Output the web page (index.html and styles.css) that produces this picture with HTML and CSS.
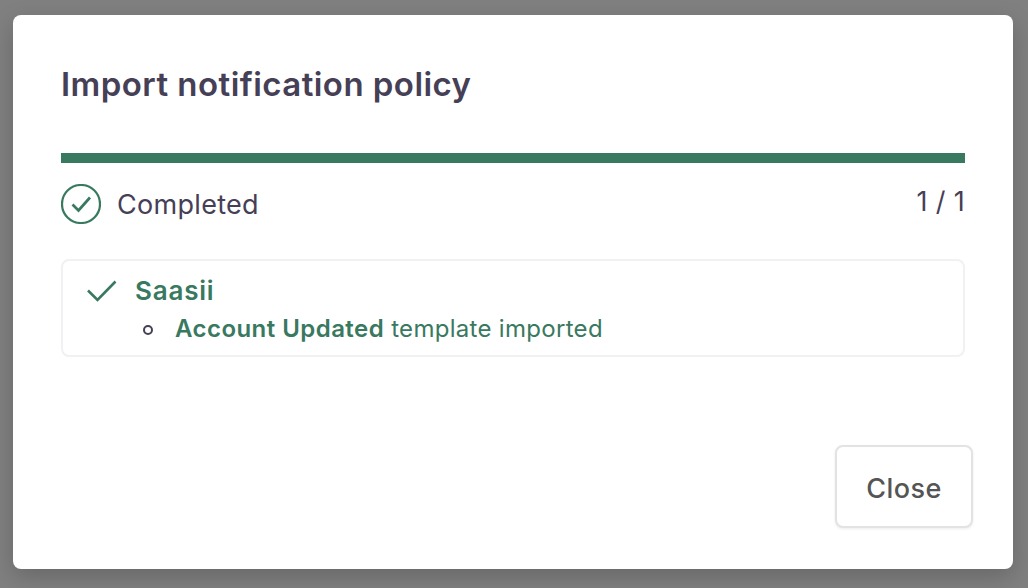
FILE: index.html
```html
<!DOCTYPE html>
<html lang="en">
<head>
    <meta charset="UTF-8">
    <title>Import notification policy</title>
    <link rel="stylesheet" href="styles.css">
</head>
<body>
    <div class="modal">
        <h2 class="modal-title">Import notification policy</h2>
        <div class="progress-bar"></div>
        <div class="progress-info">
            <div class="progress-status">
                <svg class="status-icon" width="40" height="40" viewBox="0 0 40 40" fill="none">
                    <circle cx="20" cy="20" r="19" stroke="#39795f" stroke-width="2.2"/>
                    <path d="M11.5 20.5l6 6L29 13.5" stroke="#39795f" stroke-width="2.7"/>
                </svg>
                <span>Completed</span>
            </div>
            <div class="progress-count">1 / 1</div>
        </div>
        <div class="result-card">
            <svg class="result-icon" width="30" height="22" viewBox="0 0 30 22" fill="none">
                <path d="M1 10.5l9.5 9.5L28.5 1.5" stroke="#39795f" stroke-width="2.6"/>
            </svg>
            <div class="result-body">
                <div class="result-name">Saasii</div>
                <ul class="result-list">
                    <li><strong>Account Updated</strong> template imported</li>
                </ul>
            </div>
        </div>
        <div class="modal-footer">
            <button class="close-button">Close</button>
        </div>
    </div>
</body>
</html>
```

FILE: styles.css
```css
html, body {
    height: 100%;
}
body {
    margin: 0;
    padding: 15px 15px 19px 13px;
    box-sizing: border-box;
    background-color: #808080;
    font-family: Inter, 'Liberation Sans', sans-serif;
    color: #464057;
    overflow: hidden;
}
.modal {
    width: 1000px;
    height: 554px;
    box-sizing: border-box;
    padding: 47px 48px 41px;
    background-color: #fff;
    border-radius: 8px;
    box-shadow: 0 8px 24px rgba(0, 0, 0, 0.2);
    display: flex;
    flex-direction: column;
}
.modal-title {
    margin: 0;
    font-size: 33px;
    line-height: 44px;
    font-weight: 600;
    letter-spacing: 0.45px;
}
.progress-bar {
    height: 10px;
    margin-top: 47px;
    background-color: #39795f;
}
.progress-info {
    display: flex;
    justify-content: space-between;
    margin-top: 21px;
}
.progress-status {
    display: flex;
    align-items: center;
    gap: 16px;
    font-size: 27px;
    line-height: 42px;
    letter-spacing: 0.3px;
}
.status-icon {
    margin-top: -2px;
}
.progress-count {
    font-size: 27px;
    line-height: 36px;
    letter-spacing: 0.3px;
}
.result-card {
    display: flex;
    margin-top: 33px;
    padding: 12px 24px 7px;
    border: 2px solid #f1f1f3;
    border-radius: 8px;
}
.result-icon {
    margin-top: 7px;
    margin-right: 18px;
    flex-shrink: 0;
}
.result-name {
    font-size: 26px;
    line-height: 36px;
    font-weight: 600;
    letter-spacing: 0.8px;
    color: #39795f;
}
.result-list {
    margin: 1px 0 0;
    padding-left: 40px;
    list-style: none;
    font-size: 24px;
    line-height: 38px;
    letter-spacing: 0.3px;
    color: #39795f;
}
.result-list li::before {
    content: "";
    display: inline-block;
    box-sizing: border-box;
    width: 10px;
    height: 10px;
    margin-left: -32px;
    margin-right: 22px;
    border: 2px solid #464057;
    border-radius: 50%;
    vertical-align: 2px;
}
.result-list strong {
    font-weight: 600;
    letter-spacing: 0.45px;
}
.modal-footer {
    margin-top: auto;
    display: flex;
    justify-content: flex-end;
    margin-right: -8px;
}
.close-button {
    width: 138px;
    height: 83px;
    padding-top: 5px;
    background-color: #fff;
    border: 2px solid #e3e3e3;
    border-radius: 8px;
    box-shadow: 0 1px 3px rgba(0, 0, 0, 0.08);
    font-family: Inter, 'Liberation Sans', sans-serif;
    font-size: 27px;
    font-weight: 500;
    letter-spacing: 0.4px;
    color: #555;
}
```
